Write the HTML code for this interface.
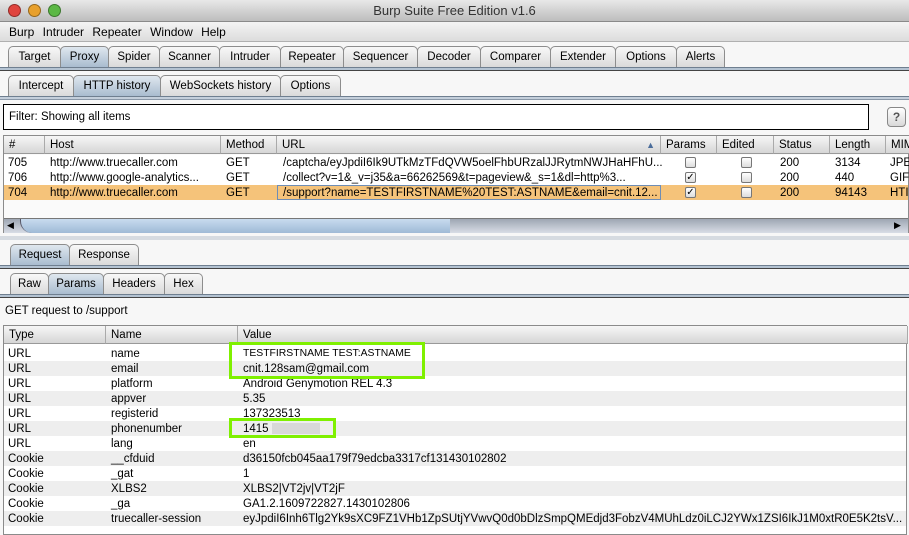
<!DOCTYPE html>
<html><head><meta charset="utf-8"><style>
*{box-sizing:border-box;margin:0;padding:0}
body{width:909px;height:532px;overflow:hidden;background:#f7f7f7;font-family:"Liberation Sans",sans-serif;font-size:11px;color:#000;position:relative}
.a{position:absolute}
.title{left:0;top:0;width:909px;height:22px;background:linear-gradient(#e8e8e8,#bdbdbd);border-bottom:1px solid #8a8a8a;text-align:center;font-size:13px;line-height:22px;color:#333}
.dot{top:4px;width:13px;height:13px;border-radius:50%;border:1px solid rgba(0,0,0,.35)}
.menu{left:0;top:22px;width:909px;height:20px;background:linear-gradient(#f4f4f4,#dcdcdc);border-bottom:1px solid #b0b0b0;line-height:20px;padding-left:9px;font-size:12px;word-spacing:5px}
.tab{position:absolute;height:21px;border:1px solid #8d8d8d;border-bottom:none;border-radius:5px 5px 0 0;background:linear-gradient(#f8f8f8,#dadada);text-align:center;line-height:21px;font-size:11.5px}
.tab.s{background:linear-gradient(#dfe7ef,#a9bccf)}
.bar{position:absolute;height:4px;background:#b4c3d2;border-top:1px solid #6f7f90;border-bottom:1px solid #444}
.grid{position:absolute;border:1px solid #8b8b8b;background:#fafafa}
.hd{position:absolute;top:0;height:18px;background:linear-gradient(#f6f6f6,#d6d6d6);border-right:1px solid #aaa;border-bottom:1px solid #999;line-height:18px;padding-left:5px;font-size:11.5px}
.r{position:absolute;left:0;height:15px;line-height:16px;white-space:nowrap;font-size:11.5px}
.r span{position:absolute}
.cb{position:absolute;width:11px;height:11px;border:1px solid #777;border-radius:2px;background:linear-gradient(#fff,#ddd);top:2px;font-size:10px;line-height:9px;text-align:center}
.g{position:absolute;border:3px solid #7ff000}
</style></head><body>
<div class="a title">Burp Suite Free Edition v1.6</div>
<div class="a dot" style="left:8px;background:#e0443e"></div>
<div class="a dot" style="left:28px;background:#e8a02c"></div>
<div class="a dot" style="left:48px;background:#5cb845"></div>
<div class="a menu">Burp Intruder Repeater Window Help</div>

<div class="tab" style="left:8px;top:46px;width:53px">Target</div>
<div class="tab s" style="left:60px;top:46px;width:49px">Proxy</div>
<div class="tab" style="left:108px;top:46px;width:52px">Spider</div>
<div class="tab" style="left:159px;top:46px;width:61px">Scanner</div>
<div class="tab" style="left:219px;top:46px;width:62px">Intruder</div>
<div class="tab" style="left:280px;top:46px;width:64px">Repeater</div>
<div class="tab" style="left:343px;top:46px;width:75px">Sequencer</div>
<div class="tab" style="left:417px;top:46px;width:64px">Decoder</div>
<div class="tab" style="left:480px;top:46px;width:71px">Comparer</div>
<div class="tab" style="left:550px;top:46px;width:66px">Extender</div>
<div class="tab" style="left:615px;top:46px;width:62px">Options</div>
<div class="tab" style="left:676px;top:46px;width:49px">Alerts</div>
<div class="bar" style="left:0;top:67px;width:909px"></div>

<div class="tab" style="left:8px;top:75px;width:66px">Intercept</div>
<div class="tab s" style="left:73px;top:75px;width:88px">HTTP history</div>
<div class="tab" style="left:160px;top:75px;width:121px">WebSockets history</div>
<div class="tab" style="left:280px;top:75px;width:61px">Options</div>
<div class="bar" style="left:0;top:96px;width:909px;height:4px;background:#c4cfdb;border-bottom:1px solid #8a98a8"></div>

<div class="a" style="left:3px;top:104px;width:866px;height:26px;border:1px solid #000;background:#fff;line-height:25px;padding-left:5px;font-size:11.5px">Filter: Showing all items</div>
<div class="a" style="left:887px;top:107px;width:19px;height:20px;border:1px solid #888;border-radius:4px;background:linear-gradient(#fff,#d8d8d8);text-align:center;line-height:18px;font-weight:bold;color:#555;font-size:12px">?</div>

<div class="grid" style="left:3px;top:135px;width:906px;height:98px">
<div class="hd" style="left:0;width:41px">#</div>
<div class="hd" style="left:41px;width:176px">Host</div>
<div class="hd" style="left:217px;width:56px">Method</div>
<div class="hd" style="left:273px;width:384px">URL<span style="position:absolute;right:5px;color:#4b6d9b;font-size:9px">▲</span></div>
<div class="hd" style="left:657px;width:56px">Params</div>
<div class="hd" style="left:713px;width:57px">Edited</div>
<div class="hd" style="left:770px;width:56px">Status</div>
<div class="hd" style="left:826px;width:56px">Length</div>
<div class="hd" style="left:882px;width:30px">MIM</div>
<div class="r" style="top:19px;width:904px;background:#fff"><span style="left:4px">705</span><span style="left:46px">http://www.truecaller.com</span><span style="left:222px">GET</span><span style="left:279px">/captcha/eyJpdiI6Ik9UTkMzTFdQVW5oelFhbURzalJJRytmNWJHaHFhU...</span><div class="cb" style="left:681px"></div><div class="cb" style="left:737px"></div><span style="left:776px">200</span><span style="left:831px">3134</span><span style="left:886px">JPEG</span></div>
<div class="r" style="top:34px;width:904px;background:#fff"><span style="left:4px">706</span><span style="left:46px">http://www.google-analytics...</span><span style="left:222px">GET</span><span style="left:279px">/collect?v=1&amp;_v=j35&amp;a=66262569&amp;t=pageview&amp;_s=1&amp;dl=http%3...</span><div class="cb" style="left:681px">✓</div><div class="cb" style="left:737px"></div><span style="left:776px">200</span><span style="left:831px">440</span><span style="left:886px">GIF</span></div>
<div class="r" style="top:49px;width:904px;background:#f5c37a"><span style="left:4px">704</span><span style="left:46px">http://www.truecaller.com</span><span style="left:222px">GET</span><div style="position:absolute;left:273px;top:0;width:384px;height:15px;border:1px solid #6e8db5"></div><span style="left:279px">/support?name=TESTFIRSTNAME%20TEST:ASTNAME&amp;email=cnit.12...</span><div class="cb" style="left:681px">✓</div><div class="cb" style="left:737px"></div><span style="left:776px">200</span><span style="left:831px">94143</span><span style="left:886px">HTI</span></div>
<div class="a" style="left:0;top:82px;width:904px;height:15px;background:linear-gradient(#9ea6b3,#d8dde6);border-top:1px solid #777"></div>
<div class="a" style="left:16px;top:83px;width:430px;height:14px;border-radius:0 0 0 12px;background:linear-gradient(#c8dbef,#9fbad6);border-left:1px solid #556"></div>
<div class="a" style="left:3px;top:84px;font-size:9px">◀</div>
<div class="a" style="left:890px;top:84px;font-size:9px">▶</div>
</div>
<div class="a" style="left:0;top:236px;width:909px;height:4px;background:#d6dbe1"></div>

<div class="tab s" style="left:10px;top:244px;width:60px">Request</div>
<div class="tab" style="left:69px;top:244px;width:70px">Response</div>
<div class="bar" style="left:0;top:265px;width:909px"></div>
<div class="tab" style="left:10px;top:273px;width:39px">Raw</div>
<div class="tab s" style="left:48px;top:273px;width:56px">Params</div>
<div class="tab" style="left:103px;top:273px;width:62px">Headers</div>
<div class="tab" style="left:164px;top:273px;width:39px">Hex</div>
<div class="bar" style="left:0;top:294px;width:909px"></div>

<div class="a" style="left:5px;top:305px;font-size:11.5px">GET request to /support</div>

<div class="grid" style="left:3px;top:325px;width:904px;height:210px;background:#fff">
<div class="hd" style="left:0;width:102px">Type</div>
<div class="hd" style="left:102px;width:132px">Name</div>
<div class="hd" style="left:234px;width:670px">Value</div>
<div class="r" style="top:20px;width:902px"><span style="left:4px">URL</span><span style="left:107px">name</span><span style="left:239px;font-size:10.4px">TESTFIRSTNAME TEST:ASTNAME</span></div>
<div class="r" style="top:35px;width:902px;background:#eee"><span style="left:4px">URL</span><span style="left:107px">email</span><span style="left:239px">cnit.128sam@gmail.com</span></div>
<div class="r" style="top:50px;width:902px"><span style="left:4px">URL</span><span style="left:107px">platform</span><span style="left:239px">Android Genymotion REL 4.3</span></div>
<div class="r" style="top:65px;width:902px;background:#eee"><span style="left:4px">URL</span><span style="left:107px">appver</span><span style="left:239px">5.35</span></div>
<div class="r" style="top:80px;width:902px"><span style="left:4px">URL</span><span style="left:107px">registerid</span><span style="left:239px">137323513</span></div>
<div class="r" style="top:95px;width:902px;background:#eee"><span style="left:4px">URL</span><span style="left:107px">phonenumber</span><span style="left:239px">1415</span><div style="position:absolute;left:268px;top:2px;width:48px;height:11px;background:#d8d8d8"></div></div>
<div class="r" style="top:110px;width:902px"><span style="left:4px">URL</span><span style="left:107px">lang</span><span style="left:239px">en</span></div>
<div class="r" style="top:125px;width:902px;background:#eee"><span style="left:4px">Cookie</span><span style="left:107px">__cfduid</span><span style="left:239px">d36150fcb045aa179f79edcba3317cf131430102802</span></div>
<div class="r" style="top:140px;width:902px"><span style="left:4px">Cookie</span><span style="left:107px">_gat</span><span style="left:239px">1</span></div>
<div class="r" style="top:155px;width:902px;background:#eee"><span style="left:4px">Cookie</span><span style="left:107px">XLBS2</span><span style="left:239px">XLBS2|VT2jv|VT2jF</span></div>
<div class="r" style="top:170px;width:902px"><span style="left:4px">Cookie</span><span style="left:107px">_ga</span><span style="left:239px">GA1.2.1609722827.1430102806</span></div>
<div class="r" style="top:185px;width:902px;background:#eee"><span style="left:4px">Cookie</span><span style="left:107px">truecaller-session</span><span style="left:239px;font-size:11.5px">eyJpdiI6Inh6Tlg2Yk9sXC9FZ1VHb1ZpSUtjYVwvQ0d0bDlzSmpQMEdjd3FobzV4MUhLdz0iLCJ2YWx1ZSI6IkJ1M0xtR0E5K2tsV...</span></div>
</div>
<div class="g" style="left:229px;top:342px;width:196px;height:37px"></div>
<div class="g" style="left:229px;top:418px;width:107px;height:20px"></div>
</body></html>
